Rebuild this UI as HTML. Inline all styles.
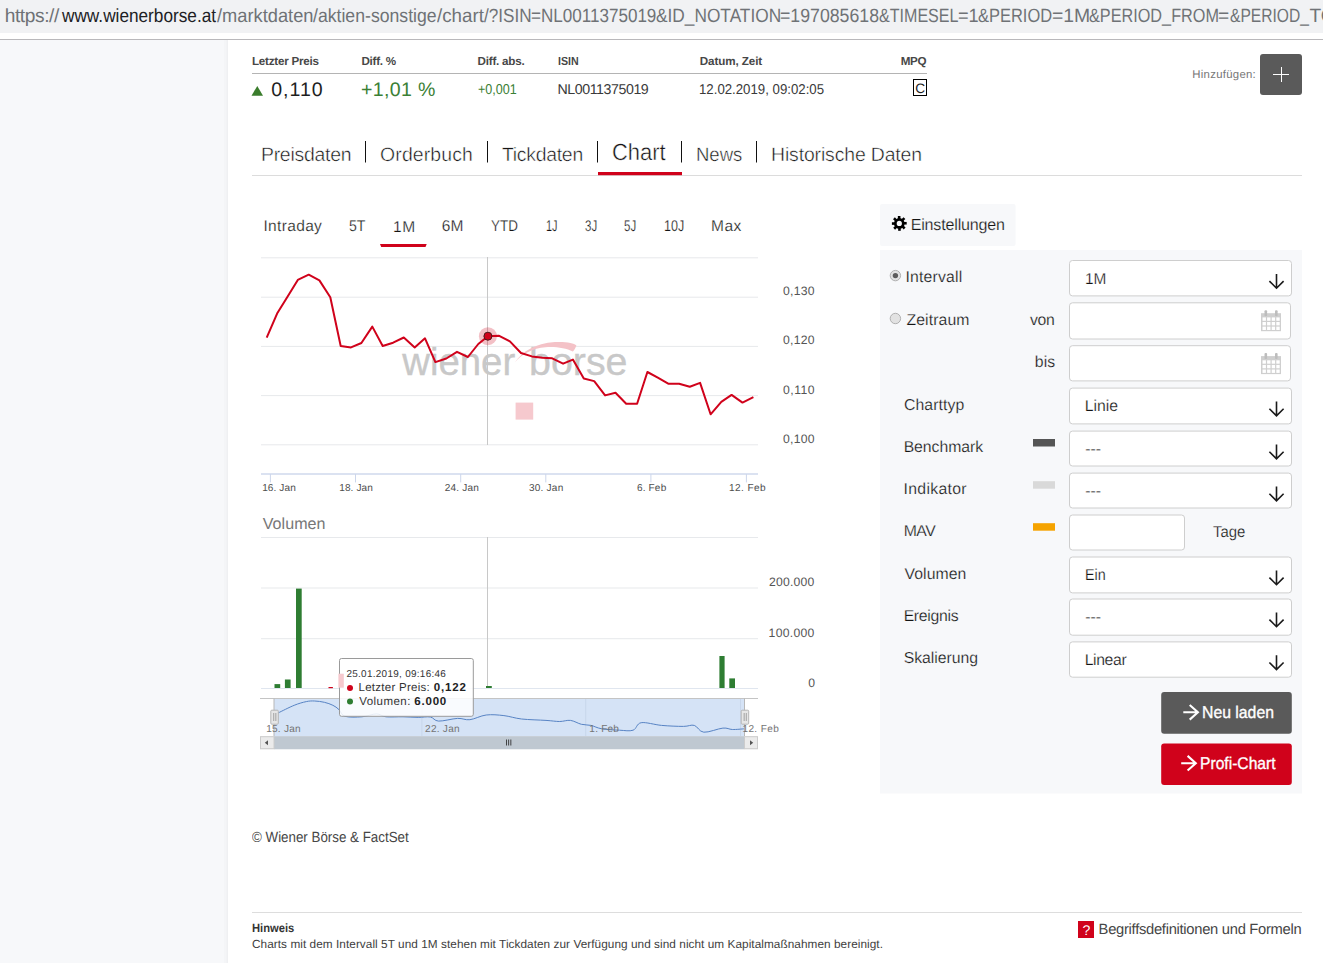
<!DOCTYPE html>
<html><head><meta charset="utf-8"><title>Wiener Börse Chart</title>
<style>
html,body{margin:0;padding:0;width:1323px;height:963px;overflow:hidden;background:#fff;}
body{position:relative;font-family:"Liberation Sans",sans-serif;}
.t{position:absolute;white-space:pre;font-family:"Liberation Sans",sans-serif;text-rendering:geometricPrecision;}
svg.g{position:absolute;left:0;top:0;}
</style></head><body>
<svg class="g" width="1323" height="963" viewBox="0 0 1323 963">
<rect x="0" y="0" width="1323" height="33" fill="#f1f2f4"/>
<rect x="0" y="39" width="1323" height="1" fill="#b9b8bb"/>
<rect x="0" y="40" width="228" height="923" fill="#f7f8fa"/>
<rect x="224" y="40" width="2" height="923" fill="#f4f5f7"/>
<rect x="226" y="40" width="1" height="923" fill="#f2f3f5"/>
<rect x="227" y="40" width="1" height="923" fill="#eff0f2"/>
<rect x="252" y="73" width="675" height="1" fill="#b4b4b4"/>
<polygon points="251.5,95.8 257.3,85.9 263,95.8" fill="#3a7d2c"/>
<rect x="913.5" y="79.5" width="13" height="16" fill="none" stroke="#000" stroke-width="1"/>
<rect x="1260" y="54" width="42" height="41" rx="3" fill="#5a5a5a"/>
<rect x="1273" y="74" width="16" height="1" fill="#fff"/><rect x="1281" y="67" width="1" height="15" fill="#fff"/>
<rect x="365" y="141" width="1" height="21.5" fill="#111"/>
<rect x="487" y="141" width="1" height="21.5" fill="#111"/>
<rect x="597" y="141" width="1" height="21.5" fill="#111"/>
<rect x="681" y="141" width="1" height="21.5" fill="#111"/>
<rect x="756" y="141" width="1" height="21.5" fill="#111"/>
<rect x="252" y="175" width="1050" height="1" fill="#dcdcdc"/>
<rect x="598" y="172" width="84" height="3.2" fill="#d0021b"/>
<polygon points="380,244 426.7,244 425.5,247 381.2,247" fill="#d0021b"/>
<rect x="261" y="257.3" width="497" height="1" fill="#e7e9ec"/>
<rect x="261" y="296.7" width="497" height="1" fill="#e7e9ec"/>
<rect x="261" y="345.9" width="497" height="1" fill="#e7e9ec"/>
<rect x="261" y="395.1" width="497" height="1" fill="#e7e9ec"/>
<rect x="261" y="444.3" width="497" height="1" fill="#e7e9ec"/>
<rect x="261" y="473.3" width="497" height="1.4" fill="#ccd6eb"/>
<rect x="269.9" y="474" width="1" height="8.4" fill="#ccd6eb"/>
<rect x="355.0" y="474" width="1" height="8.4" fill="#ccd6eb"/>
<rect x="460.2" y="474" width="1" height="8.4" fill="#ccd6eb"/>
<rect x="545.3" y="474" width="1" height="8.4" fill="#ccd6eb"/>
<rect x="650.4" y="474" width="1" height="8.4" fill="#ccd6eb"/>
<rect x="745.9" y="474" width="1" height="8.4" fill="#ccd6eb"/>
<text x="402.2" y="375" font-family="Liberation Sans" font-size="38.5" fill="#c8c8c8" stroke="#c8c8c8" stroke-width="0.35" textLength="113" lengthAdjust="spacingAndGlyphs">wiener</text>
<text x="529" y="375" font-family="Liberation Sans" font-size="38.5" fill="#c8c8c8" stroke="#c8c8c8" stroke-width="0.35" textLength="98.5" lengthAdjust="spacingAndGlyphs">borse</text>
<path d="M515,362.2 C522,352 535,343 555,342 C566,341.5 574,343 576.4,345.4 C575,349 573.5,351 572.7,351.5 C566,348 556,346.5 545.5,347.2 C533,348 522,354 515,362.2 Z" fill="#f4c2c7"/>
<rect x="515.6" y="402.6" width="17.6" height="17" fill="#f6c9ce"/>
<rect x="487" y="257" width="1" height="188" fill="#c8c8c8"/>
<polyline fill="none" stroke="#d0021b" stroke-width="2" stroke-linejoin="round" points="266.7,337.7 277.1,313.6 287.5,296.7 297.8,279.9 308.7,274.7 319.4,280.4 330.3,297.2 340.7,346 351,347.4 361.4,343 372.3,326.6 382.7,346 393.1,342.7 403.8,337.5 414.7,347.4 425,338.3 435.4,362.1 446.3,358.5 457,351.8 467.9,357 478.3,344 487.9,336.2 498.7,335.7 509.9,341.4 521,353 531.9,356.4 542.3,357.7 552.2,358.3 563.1,363.7 572.9,359.6 583.8,378.5 594.2,381.1 605.1,395.4 615.5,392.8 626.2,403.7 637.1,403.7 647.4,372 657.8,377.7 668.2,383.7 679.1,383.7 689.8,386.8 700.1,382.9 710.6,414.3 721.3,401.9 731.6,394.9 742.5,402.6 753.4,397.2"/>
<circle cx="487.9" cy="336.2" r="9" fill="#d0021b" fill-opacity="0.25"/>
<circle cx="487.9" cy="336.2" r="4" fill="#d0021b" stroke="#4a1a1a" stroke-width="1"/>
<rect x="261" y="537.0" width="497" height="1" fill="#e7e9ec"/>
<rect x="261" y="587.5" width="497" height="1" fill="#e7e9ec"/>
<rect x="261" y="638.2" width="497" height="1" fill="#e7e9ec"/>
<rect x="261" y="688" width="497" height="1" fill="#e0e6ef"/>
<rect x="487" y="537" width="1" height="151" fill="#c8c8c8"/>
<rect x="274.5" y="684.1" width="5.7" height="3.8999999999999773" fill="#2e7d32"/>
<rect x="284.9" y="679.5" width="5.7" height="8.5" fill="#2e7d32"/>
<rect x="296" y="588.6" width="5.7" height="99.39999999999998" fill="#2e7d32"/>
<rect x="719.4" y="656" width="5.2" height="32" fill="#2e7d32"/>
<rect x="729.3" y="678.4" width="5.7" height="9.600000000000023" fill="#2e7d32"/>
<rect x="486" y="686" width="5.8" height="2" fill="#2e7d32"/>
<rect x="328.5" y="687" width="4.4" height="1.2" fill="#d0021b"/>
<rect x="274" y="698.5" width="470.4" height="37.7" fill="#d5e3f6"/>
<rect x="421.4" y="698.5" width="1" height="37.7" fill="#c8d6ea"/>
<rect x="585.2" y="698.5" width="1" height="37.7" fill="#c8d6ea"/>
<rect x="740" y="698.5" width="1" height="37.7" fill="#c8d6ea"/>
<path fill="none" stroke="#5783c4" stroke-width="1" d="M274,715.5 C274.65,715.10 274.53,714.80 277.9,713.1 C281.27,711.40 289.47,707.22 294.2,705.3 C298.93,703.38 302.88,702.32 306.3,701.6 C309.72,700.88 311.68,700.88 314.7,701 C317.72,701.12 321.37,701.58 324.4,702.3 C327.43,703.02 330.48,704.10 332.9,705.3 C335.32,706.50 336.88,707.67 338.9,709.5 C340.92,711.33 341.17,715.08 345,716.3 C348.83,717.52 356.67,717.20 361.9,716.8 C367.13,716.40 372.38,713.90 376.4,713.9 C380.42,713.90 381.57,716.32 386,716.8 C390.43,717.28 397.63,716.70 403,716.8 C408.37,716.90 413.63,717.37 418.2,717.4 C422.77,717.43 427.00,716.38 430.4,717 C433.80,717.62 434.07,720.87 438.6,721.1 C443.13,721.33 452.38,718.63 457.6,718.4 C462.82,718.17 465.13,720.27 469.9,719.7 C474.67,719.13 480.53,715.68 486.2,715 C491.87,714.32 498.00,714.93 503.9,715.6 C509.80,716.27 514.58,718.20 521.6,719 C528.62,719.80 539.65,719.98 546,720.4 C552.35,720.82 555.62,721.50 559.7,721.5 C563.78,721.50 566.88,719.93 570.5,720.4 C574.12,720.87 578.00,723.47 581.4,724.3 C584.80,725.13 587.50,724.65 590.9,725.4 C594.30,726.15 597.03,728.00 601.8,728.8 C606.57,729.60 614.28,729.97 619.5,730.2 C624.72,730.43 629.48,731.45 633.1,730.2 C636.72,728.95 636.45,723.50 641.2,722.7 C645.95,721.90 654.57,724.78 661.6,725.4 C668.63,726.02 677.95,726.40 683.4,726.4 C688.85,726.40 690.90,724.43 694.3,725.4 C697.70,726.37 699.03,731.75 703.8,732.2 C708.57,732.65 718.13,728.55 722.9,728.1 C727.67,727.65 728.82,729.38 732.4,729.5 C735.98,729.62 742.40,728.92 744.4,728.8"/>
<rect x="260" y="698" width="498" height="1" fill="#c4c4c4"/>
<rect x="273.5" y="698.5" width="1" height="37.7" fill="#b8b8b8"/><rect x="744" y="698.5" width="1" height="37.7" fill="#b8b8b8"/>
<rect x="270.8" y="710.2" width="7.5" height="14" rx="1" fill="#e6e6e6" stroke="#b5b5b5" stroke-width="1"/>
<rect x="273.3" y="713" width="0.9" height="8" fill="#9a9a9a"/><rect x="275.40000000000003" y="713" width="0.9" height="8" fill="#9a9a9a"/>
<rect x="741.2" y="710.2" width="7.5" height="14" rx="1" fill="#e6e6e6" stroke="#b5b5b5" stroke-width="1"/>
<rect x="743.7" y="713" width="0.9" height="8" fill="#9a9a9a"/><rect x="745.8000000000001" y="713" width="0.9" height="8" fill="#9a9a9a"/>
<rect x="260" y="736.2" width="498" height="13" fill="#ebebeb"/>
<rect x="274" y="736.2" width="470.4" height="13" fill="#bfc8d1"/>
<rect x="260.5" y="736.7" width="13.5" height="12" fill="none" stroke="#cccccc" stroke-width="1"/>
<rect x="744.5" y="736.7" width="13" height="12" fill="none" stroke="#cccccc" stroke-width="1"/>
<polygon points="264.8,742.7 268,740.2 268,745.2" fill="#555"/>
<polygon points="753.2,742.7 750,740.2 750,745.2" fill="#555"/>
<rect x="506" y="739.5" width="0.9" height="6" fill="#333"/><rect x="508.2" y="739.5" width="0.9" height="6" fill="#333"/><rect x="510.4" y="739.5" width="0.9" height="6" fill="#333"/>
<rect x="339.5" y="658.5" width="133.8" height="57.8" rx="2" fill="#fff" fill-opacity="0.85" stroke="#9a9a9a" stroke-width="1"/>
<rect x="338.4" y="673.7" width="5.4" height="14" fill="#f6c9ce"/>
<circle cx="350" cy="687.9" r="3" fill="#d0021b"/><circle cx="350" cy="701.6" r="3" fill="#2e7d32"/>
<rect x="880" y="204" width="135.6" height="42" rx="2" fill="#f7f8fa"/>
<g transform="translate(899.3,223.4)" fill="#000">
<rect x="-1.45" y="-7.4" width="2.6" height="4" transform="rotate(0)"/>
<rect x="-1.45" y="-7.4" width="2.6" height="4" transform="rotate(45)"/>
<rect x="-1.45" y="-7.4" width="2.6" height="4" transform="rotate(90)"/>
<rect x="-1.45" y="-7.4" width="2.6" height="4" transform="rotate(135)"/>
<rect x="-1.45" y="-7.4" width="2.6" height="4" transform="rotate(180)"/>
<rect x="-1.45" y="-7.4" width="2.6" height="4" transform="rotate(225)"/>
<rect x="-1.45" y="-7.4" width="2.6" height="4" transform="rotate(270)"/>
<rect x="-1.45" y="-7.4" width="2.6" height="4" transform="rotate(315)"/>
<path fill-rule="evenodd" d="M-5.3,0 A5.3,5.3 0 1 0 5.3,0 A5.3,5.3 0 1 0 -5.3,0 Z M-2.6,0 A2.6,2.6 0 1 1 2.6,0 A2.6,2.6 0 1 1 -2.6,0 Z"/>
</g>
<rect x="880" y="250" width="422" height="543.5" fill="#f7f8fa"/>
<circle cx="895.4" cy="275.6" r="5.2" fill="#e2e2e2" stroke="#b0b0b0" stroke-width="1"/>
<circle cx="895.4" cy="275.6" r="2.7" fill="#5c5c5c"/>
<circle cx="895.4" cy="318.5" r="5.2" fill="#e2e2e2" stroke="#b0b0b0" stroke-width="1"/>
<rect x="1069.5" y="260.5" width="222" height="35.4" rx="3" fill="#fff" stroke="#cecece" stroke-width="1"/>
<path d="M1276.5,273.9 V288 M1269.4,281.1 L1276.5,288.2 L1283.6,281.1" fill="none" stroke="#1a1a1a" stroke-width="1.6"/>
<rect x="1069.5" y="302.8" width="221" height="36.2" rx="3" fill="#fff" stroke="#cecece" stroke-width="1"/>
<rect x="1069.5" y="345.7" width="221" height="35.2" rx="3" fill="#fff" stroke="#cecece" stroke-width="1"/>
<rect x="1069.5" y="388.1" width="222" height="35.8" rx="3" fill="#fff" stroke="#cecece" stroke-width="1"/>
<path d="M1276.5,401.5 V415.6 M1269.4,408.70000000000005 L1276.5,415.8 L1283.6,408.70000000000005" fill="none" stroke="#1a1a1a" stroke-width="1.6"/>
<rect x="1069.5" y="431.1" width="222" height="34.9" rx="3" fill="#fff" stroke="#cecece" stroke-width="1"/>
<path d="M1276.5,444.5 V458.6 M1269.4,451.70000000000005 L1276.5,458.8 L1283.6,451.70000000000005" fill="none" stroke="#1a1a1a" stroke-width="1.6"/>
<rect x="1069.5" y="473.1" width="222" height="34.9" rx="3" fill="#fff" stroke="#cecece" stroke-width="1"/>
<path d="M1276.5,486.5 V500.6 M1269.4,493.70000000000005 L1276.5,500.8 L1283.6,493.70000000000005" fill="none" stroke="#1a1a1a" stroke-width="1.6"/>
<rect x="1069.5" y="557.0" width="222" height="35.9" rx="3" fill="#fff" stroke="#cecece" stroke-width="1"/>
<path d="M1276.5,570.4 V584.5 M1269.4,577.6 L1276.5,584.7 L1283.6,577.6" fill="none" stroke="#1a1a1a" stroke-width="1.6"/>
<rect x="1069.5" y="599.0" width="222" height="36.2" rx="3" fill="#fff" stroke="#cecece" stroke-width="1"/>
<path d="M1276.5,612.4 V626.5 M1269.4,619.6 L1276.5,626.7 L1283.6,619.6" fill="none" stroke="#1a1a1a" stroke-width="1.6"/>
<rect x="1069.5" y="641.9" width="222" height="35.3" rx="3" fill="#fff" stroke="#cecece" stroke-width="1"/>
<path d="M1276.5,655.3 V669.4 M1269.4,662.5 L1276.5,669.6 L1283.6,662.5" fill="none" stroke="#1a1a1a" stroke-width="1.6"/>
<rect x="1069.5" y="515" width="115" height="35" rx="3" fill="#fff" stroke="#cecece" stroke-width="1"/>
<rect x="1261" y="313.2" width="20" height="18" fill="#cfcfcf"/>
<rect x="1262.50" y="317.40" width="3.4" height="3.4" fill="#fff"/>
<rect x="1262.50" y="322.00" width="3.4" height="3.4" fill="#fff"/>
<rect x="1262.50" y="326.60" width="3.4" height="3.4" fill="#fff"/>
<rect x="1267.10" y="317.40" width="3.4" height="3.4" fill="#fff"/>
<rect x="1267.10" y="322.00" width="3.4" height="3.4" fill="#fff"/>
<rect x="1267.10" y="326.60" width="3.4" height="3.4" fill="#fff"/>
<rect x="1271.70" y="317.40" width="3.4" height="3.4" fill="#fff"/>
<rect x="1271.70" y="322.00" width="3.4" height="3.4" fill="#fff"/>
<rect x="1271.70" y="326.60" width="3.4" height="3.4" fill="#fff"/>
<rect x="1276.30" y="317.40" width="3.4" height="3.4" fill="#fff"/>
<rect x="1276.30" y="322.00" width="3.4" height="3.4" fill="#fff"/>
<rect x="1276.30" y="326.60" width="3.4" height="3.4" fill="#fff"/>
<rect x="1264.5" y="310.2" width="2.6" height="6" rx="1" fill="#bdbdbd"/><rect x="1275" y="310.2" width="2.6" height="6" rx="1" fill="#bdbdbd"/>
<rect x="1261" y="356.1" width="20" height="18" fill="#cfcfcf"/>
<rect x="1262.50" y="360.30" width="3.4" height="3.4" fill="#fff"/>
<rect x="1262.50" y="364.90" width="3.4" height="3.4" fill="#fff"/>
<rect x="1262.50" y="369.50" width="3.4" height="3.4" fill="#fff"/>
<rect x="1267.10" y="360.30" width="3.4" height="3.4" fill="#fff"/>
<rect x="1267.10" y="364.90" width="3.4" height="3.4" fill="#fff"/>
<rect x="1267.10" y="369.50" width="3.4" height="3.4" fill="#fff"/>
<rect x="1271.70" y="360.30" width="3.4" height="3.4" fill="#fff"/>
<rect x="1271.70" y="364.90" width="3.4" height="3.4" fill="#fff"/>
<rect x="1271.70" y="369.50" width="3.4" height="3.4" fill="#fff"/>
<rect x="1276.30" y="360.30" width="3.4" height="3.4" fill="#fff"/>
<rect x="1276.30" y="364.90" width="3.4" height="3.4" fill="#fff"/>
<rect x="1276.30" y="369.50" width="3.4" height="3.4" fill="#fff"/>
<rect x="1264.5" y="353.1" width="2.6" height="6" rx="1" fill="#bdbdbd"/><rect x="1275" y="353.1" width="2.6" height="6" rx="1" fill="#bdbdbd"/>
<rect x="1033" y="439" width="22" height="7.5" fill="#555"/>
<rect x="1033" y="481.2" width="22" height="7.5" fill="#d9d9d9"/>
<rect x="1033" y="523.2" width="22" height="7.5" fill="#f5a300"/>
<rect x="1161.2" y="692" width="130.6" height="41.8" rx="3" fill="#5a5a5a"/>
<rect x="1161.2" y="743.4" width="130.6" height="41.6" rx="3" fill="#d0021b"/>
<path d="M1183.3,712.3 H1197.8999999999999 M1189.7,705.0 L1197.8999999999999,712.3 L1189.7,719.5999999999999" fill="none" stroke="#fff" stroke-width="2.1"/>
<path d="M1181.2,763.2 H1195.8 M1187.6000000000001,755.9000000000001 L1195.8,763.2 L1187.6000000000001,770.5" fill="none" stroke="#fff" stroke-width="2.1"/>
<rect x="252" y="912" width="1050" height="1" fill="#dddddd"/>
<rect x="1078" y="921" width="16" height="17" fill="#d0021b"/>
</svg>
<span class="t" style="left:4.72px;top:7px;font-size:19.17px;line-height:19.17px;color:#6f7276;letter-spacing:-0.419px">https://</span>
<span class="t" style="left:62.21px;top:7px;font-size:19.17px;line-height:19.17px;color:#202124;transform:scaleX(0.8988);transform-origin:0 0">www.wienerborse.at</span>
<span class="t" style="left:216.53px;top:7px;font-size:19.17px;line-height:19.17px;color:#6f7276;transform:scaleX(0.9539);transform-origin:0 0">/marktdaten</span>
<span class="t" style="left:312.74px;top:7px;font-size:19.17px;line-height:19.17px;color:#6f7276;transform:scaleX(0.9213);transform-origin:0 0">/aktien-sonstige</span>
<span class="t" style="left:436.52px;top:7px;font-size:19.17px;line-height:19.17px;color:#6f7276;transform:scaleX(0.9776);transform-origin:0 0">/chart</span>
<span class="t" style="left:484.14px;top:7px;font-size:19.17px;line-height:19.17px;color:#6f7276;transform:scaleX(0.8949);transform-origin:0 0">/?ISIN</span>
<span class="t" style="left:530.73px;top:7px;font-size:19.17px;line-height:19.17px;color:#6f7276;transform:scaleX(0.8904);transform-origin:0 0">=NL0011375019</span>
<span class="t" style="left:655.86px;top:7px;font-size:19.17px;line-height:19.17px;color:#6f7276;transform:scaleX(0.9023);transform-origin:0 0">&amp;ID_NOTATION</span>
<span class="t" style="left:779.99px;top:7px;font-size:19.17px;line-height:19.17px;color:#6f7276;transform:scaleX(0.9250);transform-origin:0 0">=197085618</span>
<span class="t" style="left:879.00px;top:7px;font-size:19.17px;line-height:19.17px;color:#6f7276;transform:scaleX(0.8389);transform-origin:0 0">&amp;TIMESEL</span>
<span class="t" style="left:957.97px;top:7px;font-size:19.17px;line-height:19.17px;color:#6f7276;transform:scaleX(0.9486);transform-origin:0 0">=1</span>
<span class="t" style="left:978.39px;top:7px;font-size:19.17px;line-height:19.17px;color:#6f7276;transform:scaleX(0.8589);transform-origin:0 0">&amp;PERIOD</span>
<span class="t" style="left:1051.90px;top:7px;font-size:19.17px;line-height:19.17px;color:#6f7276;transform:scaleX(1.0118);transform-origin:0 0">=1M</span>
<span class="t" style="left:1089.19px;top:7px;font-size:19.17px;line-height:19.17px;color:#6f7276;transform:scaleX(0.8478);transform-origin:0 0">&amp;PERIOD_FROM</span>
<span class="t" style="left:1217.91px;top:7px;font-size:19.17px;line-height:19.17px;color:#6f7276">=</span>
<span class="t" style="left:1230.02px;top:7px;font-size:19.17px;line-height:19.17px;color:#6f7276;transform:scaleX(0.8145);transform-origin:0 0">&amp;PERIOD_</span>
<span class="t" style="left:1309.53px;top:7px;font-size:19.17px;line-height:19.17px;color:#6f7276">TO</span>
<span class="t" style="left:251.94px;top:56px;font-size:11.65px;line-height:11.65px;color:#474747;font-weight:bold;letter-spacing:-0.228px">Letzter Preis</span>
<span class="t" style="left:361.44px;top:56px;font-size:11.65px;line-height:11.65px;color:#474747;font-weight:bold;letter-spacing:-0.248px">Diff. %</span>
<span class="t" style="left:477.54px;top:56px;font-size:11.65px;line-height:11.65px;color:#474747;font-weight:bold;letter-spacing:-0.217px">Diff. abs.</span>
<span class="t" style="left:558.00px;top:56px;font-size:11.65px;line-height:11.65px;color:#474747;font-weight:bold;transform:scaleX(0.9149);transform-origin:0 0">ISIN</span>
<span class="t" style="left:699.74px;top:56px;font-size:11.65px;line-height:11.65px;color:#474747;font-weight:bold;letter-spacing:-0.097px">Datum, Zeit</span>
<span class="t" style="left:900.74px;top:56px;font-size:11.65px;line-height:11.65px;color:#474747;font-weight:bold;letter-spacing:-0.334px">MPQ</span>
<span class="t" style="left:271.14px;top:81px;font-size:19.56px;line-height:19.56px;color:#1e1e1e;letter-spacing:1.025px">0,110</span>
<span class="t" style="left:361.08px;top:81px;font-size:19.56px;line-height:19.56px;color:#3b8035;letter-spacing:0.320px">+1,01 %</span>
<span class="t" style="left:477.61px;top:83px;font-size:14.20px;line-height:14.20px;color:#3b8035;transform:scaleX(0.8862);transform-origin:0 0">+0,001</span>
<span class="t" style="left:557.45px;top:83px;font-size:14.20px;line-height:14.20px;color:#3a3a3a;letter-spacing:-0.425px">NL0011375019</span>
<span class="t" style="left:699.40px;top:83px;font-size:14.20px;line-height:14.20px;color:#3a3a3a;transform:scaleX(0.9321);transform-origin:0 0">12.02.2019, 09:02:05</span>
<span class="t" style="left:915.18px;top:82px;font-size:13.66px;line-height:13.66px;color:#222">C</span>
<span class="t" style="left:1192.33px;top:70px;font-size:11.39px;line-height:11.39px;color:#777;letter-spacing:0.273px">Hinzufügen:</span>
<span class="t" style="left:260.97px;top:146px;font-size:19.42px;line-height:19.42px;color:#151515;letter-spacing:-0.254px;-webkit-text-stroke:0.45px #fff">Preisdaten</span>
<span class="t" style="left:380.08px;top:146px;font-size:19.42px;line-height:19.42px;color:#151515;letter-spacing:0.126px;-webkit-text-stroke:0.45px #fff">Orderbuch</span>
<span class="t" style="left:501.93px;top:146px;font-size:19.42px;line-height:19.42px;color:#151515;letter-spacing:-0.270px;-webkit-text-stroke:0.45px #fff">Tickdaten</span>
<span class="t" style="left:696.15px;top:146px;font-size:19.42px;line-height:19.42px;color:#151515;transform:scaleX(0.9534);transform-origin:0 0;-webkit-text-stroke:0.45px #fff">News</span>
<span class="t" style="left:771.07px;top:146px;font-size:19.42px;line-height:19.42px;color:#151515;letter-spacing:-0.136px;-webkit-text-stroke:0.45px #fff">Historische Daten</span>
<span class="t" style="left:612.10px;top:141px;font-size:23.44px;line-height:23.44px;color:#151515;transform:scaleX(0.9364);transform-origin:0 0;-webkit-text-stroke:0.45px #fff">Chart</span>
<span class="t" style="left:263.42px;top:219px;font-size:15.54px;line-height:15.54px;color:#141414;letter-spacing:0.334px;-webkit-text-stroke:0.25px #fff">Intraday</span>
<span class="t" style="left:348.69px;top:219px;font-size:15.54px;line-height:15.54px;color:#141414;transform:scaleX(0.9079);transform-origin:0 0;-webkit-text-stroke:0.25px #fff">5T</span>
<span class="t" style="left:441.73px;top:219px;font-size:15.54px;line-height:15.54px;color:#141414;letter-spacing:0.186px;-webkit-text-stroke:0.25px #fff">6M</span>
<span class="t" style="left:490.78px;top:219px;font-size:15.54px;line-height:15.54px;color:#141414;transform:scaleX(0.8680);transform-origin:0 0;-webkit-text-stroke:0.25px #fff">YTD</span>
<span class="t" style="left:545.81px;top:219px;font-size:15.54px;line-height:15.54px;color:#141414;transform:scaleX(0.7050);transform-origin:0 0;-webkit-text-stroke:0.25px #fff">1J</span>
<span class="t" style="left:584.82px;top:219px;font-size:15.54px;line-height:15.54px;color:#141414;transform:scaleX(0.7430);transform-origin:0 0;-webkit-text-stroke:0.25px #fff">3J</span>
<span class="t" style="left:624.27px;top:219px;font-size:15.54px;line-height:15.54px;color:#141414;transform:scaleX(0.7395);transform-origin:0 0;-webkit-text-stroke:0.25px #fff">5J</span>
<span class="t" style="left:664.37px;top:219px;font-size:15.54px;line-height:15.54px;color:#141414;transform:scaleX(0.8103);transform-origin:0 0;-webkit-text-stroke:0.25px #fff">10J</span>
<span class="t" style="left:710.95px;top:219px;font-size:15.54px;line-height:15.54px;color:#141414;letter-spacing:0.502px;-webkit-text-stroke:0.25px #fff">Max</span>
<span class="t" style="left:393.03px;top:220px;font-size:15.54px;line-height:15.54px;color:#141414;letter-spacing:0.684px;-webkit-text-stroke:0.25px #fff">1M</span>
<span class="t" style="left:783.07px;top:285px;font-size:12.19px;line-height:12.19px;color:#555;letter-spacing:0.239px">0,130</span>
<span class="t" style="left:783.07px;top:334px;font-size:12.19px;line-height:12.19px;color:#555;letter-spacing:0.239px">0,120</span>
<span class="t" style="left:783.07px;top:384px;font-size:12.19px;line-height:12.19px;color:#555;letter-spacing:0.489px">0,110</span>
<span class="t" style="left:783.07px;top:433px;font-size:12.19px;line-height:12.19px;color:#555;letter-spacing:0.239px">0,100</span>
<span class="t" style="left:262.13px;top:484px;font-size:10.05px;line-height:10.05px;color:#4e4e4e;letter-spacing:0.112px">16. Jan</span>
<span class="t" style="left:339.23px;top:484px;font-size:10.05px;line-height:10.05px;color:#4e4e4e;letter-spacing:0.112px">18. Jan</span>
<span class="t" style="left:444.72px;top:484px;font-size:10.05px;line-height:10.05px;color:#4e4e4e;letter-spacing:0.180px">24. Jan</span>
<span class="t" style="left:529.03px;top:484px;font-size:10.05px;line-height:10.05px;color:#4e4e4e;letter-spacing:0.212px">30. Jan</span>
<span class="t" style="left:636.90px;top:484px;font-size:10.05px;line-height:10.05px;color:#4e4e4e;letter-spacing:0.169px">6. Feb</span>
<span class="t" style="left:729.03px;top:484px;font-size:10.05px;line-height:10.05px;color:#4e4e4e;letter-spacing:0.407px">12. Feb</span>
<span class="t" style="left:262.65px;top:516px;font-size:16.08px;line-height:16.08px;color:#777;letter-spacing:0.058px">Volumen</span>
<span class="t" style="left:769.05px;top:576px;font-size:12.19px;line-height:12.19px;color:#555;letter-spacing:0.213px">200.000</span>
<span class="t" style="left:768.61px;top:627px;font-size:12.19px;line-height:12.19px;color:#555;letter-spacing:0.286px">100.000</span>
<span class="t" style="left:808.17px;top:677px;font-size:12.19px;line-height:12.19px;color:#555">0</span>
<span class="t" style="left:266.13px;top:725px;font-size:10.05px;line-height:10.05px;color:#747474;letter-spacing:0.262px">15. Jan</span>
<span class="t" style="left:425.12px;top:725px;font-size:10.05px;line-height:10.05px;color:#747474;letter-spacing:0.247px">22. Jan</span>
<span class="t" style="left:589.33px;top:725px;font-size:10.05px;line-height:10.05px;color:#747474;letter-spacing:0.222px">1. Feb</span>
<span class="t" style="left:742.43px;top:725px;font-size:10.05px;line-height:10.05px;color:#747474;letter-spacing:0.373px">12. Feb</span>
<span class="t" style="left:910.64px;top:217px;font-size:16.08px;line-height:16.08px;color:#141414;letter-spacing:-0.176px;-webkit-text-stroke:0.22px #f7f8fa">Einstellungen</span>
<span class="t" style="left:905.50px;top:270px;font-size:15.81px;line-height:15.81px;color:#141414;letter-spacing:0.185px;-webkit-text-stroke:0.22px #f7f8fa">Intervall</span>
<span class="t" style="left:906.47px;top:313px;font-size:15.81px;line-height:15.81px;color:#141414;letter-spacing:0.097px;-webkit-text-stroke:0.22px #f7f8fa">Zeitraum</span>
<span class="t" style="left:1030.02px;top:313px;font-size:15.81px;line-height:15.81px;color:#141414;letter-spacing:-0.314px;-webkit-text-stroke:0.22px #f7f8fa">von</span>
<span class="t" style="left:1034.82px;top:355px;font-size:15.81px;line-height:15.81px;color:#141414;letter-spacing:0.084px;-webkit-text-stroke:0.22px #f7f8fa">bis</span>
<span class="t" style="left:903.93px;top:398px;font-size:15.81px;line-height:15.81px;color:#141414;letter-spacing:0.092px;-webkit-text-stroke:0.22px #f7f8fa">Charttyp</span>
<span class="t" style="left:903.64px;top:440px;font-size:15.81px;line-height:15.81px;color:#141414;letter-spacing:-0.044px;-webkit-text-stroke:0.22px #f7f8fa">Benchmark</span>
<span class="t" style="left:903.50px;top:482px;font-size:15.81px;line-height:15.81px;color:#141414;letter-spacing:0.316px;-webkit-text-stroke:0.22px #f7f8fa">Indikator</span>
<span class="t" style="left:903.64px;top:524px;font-size:15.81px;line-height:15.81px;color:#141414;letter-spacing:-0.425px;-webkit-text-stroke:0.22px #f7f8fa">MAV</span>
<span class="t" style="left:904.54px;top:567px;font-size:15.81px;line-height:15.81px;color:#141414;letter-spacing:0.059px;-webkit-text-stroke:0.22px #f7f8fa">Volumen</span>
<span class="t" style="left:903.64px;top:609px;font-size:15.81px;line-height:15.81px;color:#141414;letter-spacing:-0.294px;-webkit-text-stroke:0.22px #f7f8fa">Ereignis</span>
<span class="t" style="left:903.75px;top:651px;font-size:15.81px;line-height:15.81px;color:#141414;letter-spacing:-0.048px;-webkit-text-stroke:0.22px #f7f8fa">Skalierung</span>
<span class="t" style="left:1213.16px;top:525px;font-size:15.81px;line-height:15.81px;color:#141414;transform:scaleX(0.9442);transform-origin:0 0;-webkit-text-stroke:0.22px #f7f8fa">Tage</span>
<span class="t" style="left:1084.75px;top:272px;font-size:15.81px;line-height:15.81px;color:#141414;transform:scaleX(0.9752);transform-origin:0 0;-webkit-text-stroke:0.22px #fff">1M</span>
<span class="t" style="left:1084.64px;top:399px;font-size:15.81px;line-height:15.81px;color:#141414;-webkit-text-stroke:0.22px #fff">Linie</span>
<span class="t" style="left:1085.23px;top:442px;font-size:15.81px;line-height:15.81px;color:#141414;-webkit-text-stroke:0.22px #fff">---</span>
<span class="t" style="left:1085.23px;top:484px;font-size:15.81px;line-height:15.81px;color:#141414;-webkit-text-stroke:0.22px #fff">---</span>
<span class="t" style="left:1084.76px;top:568px;font-size:15.81px;line-height:15.81px;color:#141414;transform:scaleX(0.9102);transform-origin:0 0;-webkit-text-stroke:0.22px #fff">Ein</span>
<span class="t" style="left:1085.23px;top:610px;font-size:15.81px;line-height:15.81px;color:#141414;-webkit-text-stroke:0.22px #fff">---</span>
<span class="t" style="left:1084.64px;top:653px;font-size:15.81px;line-height:15.81px;color:#141414;letter-spacing:-0.371px;-webkit-text-stroke:0.22px #fff">Linear</span>
<span class="t" style="left:1202.16px;top:704px;font-size:17.01px;line-height:17.01px;color:#fff;transform:scaleX(0.9280);transform-origin:0 0;-webkit-text-stroke:0.35px #fff">Neu laden</span>
<span class="t" style="left:1200.08px;top:755px;font-size:17.01px;line-height:17.01px;color:#fff;transform:scaleX(0.9195);transform-origin:0 0;-webkit-text-stroke:0.35px #fff">Profi-Chart</span>
<span class="t" style="left:346.39px;top:670px;font-size:9.91px;line-height:9.91px;color:#333;letter-spacing:0.308px">25.01.2019, 09:16:46</span>
<span class="t" style="left:358.49px;top:683px;font-size:11.52px;line-height:11.52px;color:#333;letter-spacing:0.263px">Letzter Preis:</span>
<span class="t" style="left:433.79px;top:683px;font-size:11.52px;line-height:11.52px;color:#222;font-weight:bold;letter-spacing:0.848px">0,122</span>
<span class="t" style="left:359.25px;top:697px;font-size:11.52px;line-height:11.52px;color:#333;letter-spacing:0.451px">Volumen:</span>
<span class="t" style="left:414.30px;top:697px;font-size:11.52px;line-height:11.52px;color:#222;font-weight:bold;letter-spacing:0.781px">6.000</span>
<span class="t" style="left:252.07px;top:831px;font-size:14.74px;line-height:14.74px;color:#464646;transform:scaleX(0.9058);transform-origin:0 0">© Wiener Börse &amp; FactSet</span>
<span class="t" style="left:251.99px;top:922px;font-size:12.06px;line-height:12.06px;color:#333;font-weight:bold;transform:scaleX(0.9299);transform-origin:0 0">Hinweis</span>
<span class="t" style="left:252.04px;top:939px;font-size:11.79px;line-height:11.79px;color:#3e3e3e;letter-spacing:0.056px">Charts mit dem Intervall 5T und 1M stehen mit Tickdaten zur Verfügung und sind nicht um Kapitalmaßnahmen bereinigt.</span>
<span class="t" style="left:1098.61px;top:923px;font-size:14.74px;line-height:14.74px;color:#464646;letter-spacing:-0.283px">Begriffsdefinitionen und Formeln</span>
<span class="t" style="left:1082.46px;top:923px;font-size:14.07px;line-height:14.07px;color:#fff">?</span>
</body></html>
